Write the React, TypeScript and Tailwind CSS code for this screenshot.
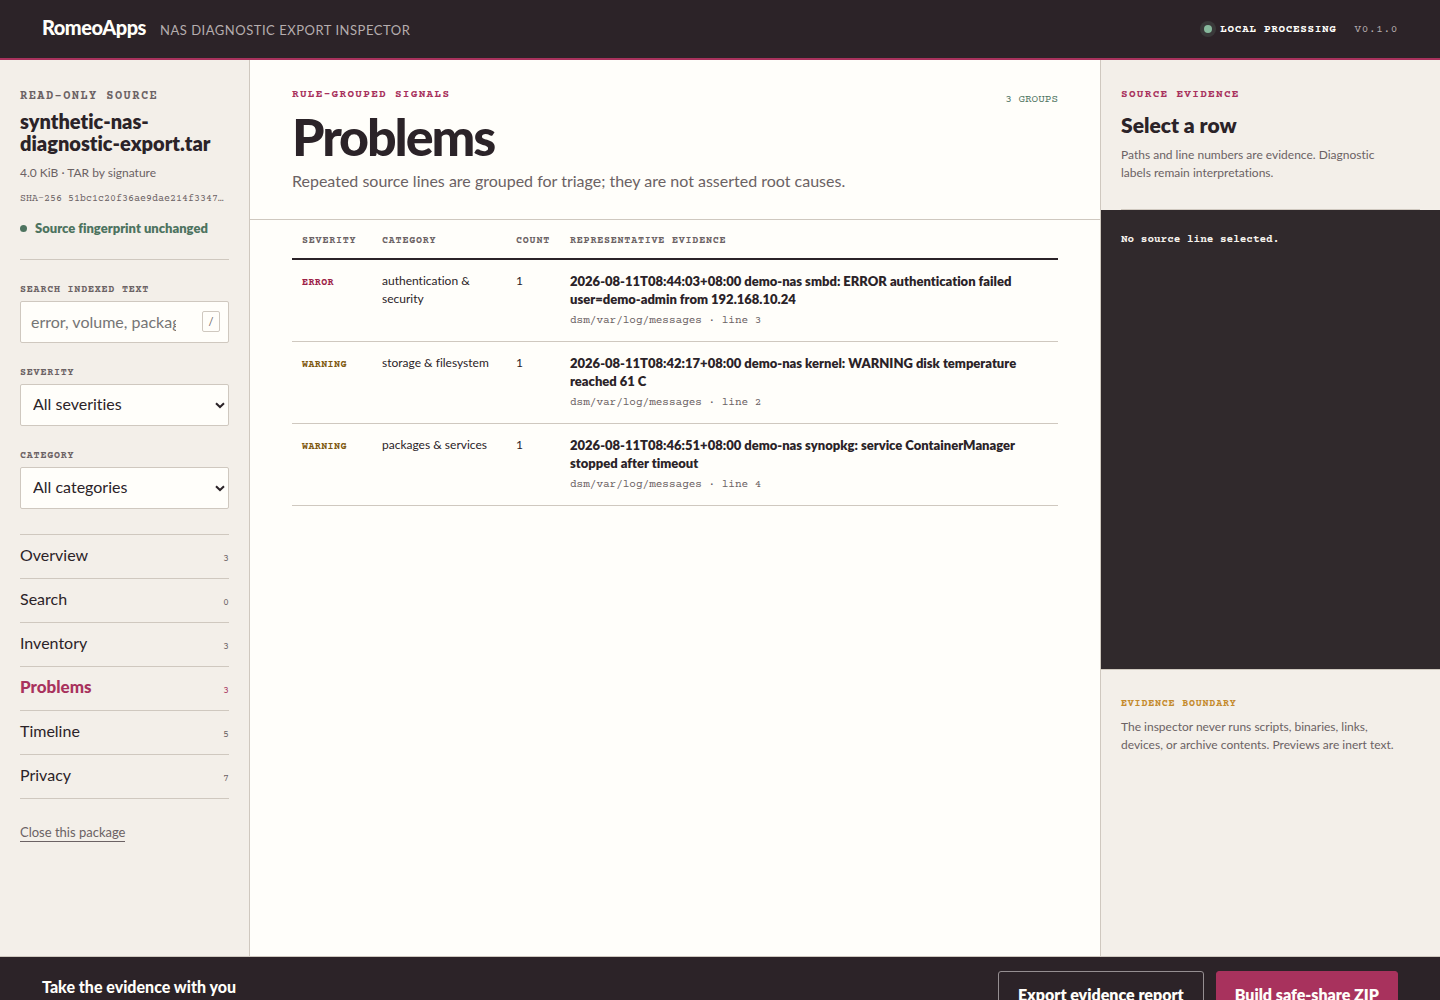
import { useState } from "react";

const views = [
  { name: "Overview", count: 3 },
  { name: "Search", count: 0 },
  { name: "Inventory", count: 3 },
  { name: "Problems", count: 3 },
  { name: "Timeline", count: 5 },
  { name: "Privacy", count: 7 },
];

const problems = [
  {
    severity: "ERROR",
    category: "authentication & security",
    count: 1,
    evidence: "2026-08-11T08:44:03+08:00 demo-nas smbd: ERROR authentication failed user=demo-admin from 192.168.10.24",
    source: "dsm/var/log/messages · line 3",
  },
  {
    severity: "WARNING",
    category: "storage & filesystem",
    count: 1,
    evidence: "2026-08-11T08:42:17+08:00 demo-nas kernel: WARNING disk temperature reached 61 C",
    source: "dsm/var/log/messages · line 2",
  },
  {
    severity: "WARNING",
    category: "packages & services",
    count: 1,
    evidence: "2026-08-11T08:46:51+08:00 demo-nas synopkg: service ContainerManager stopped after timeout",
    source: "dsm/var/log/messages · line 4",
  },
];

const mono = "font-['Courier_Prime','Liberation_Mono',monospace]";
const fieldLabel = `${mono} block text-[10px] leading-4 font-bold tracking-[0.08em] text-[#6b6264]`;

function SelectField({ id, label, option }: { id: string; label: string; option: string }) {
  return (
    <div>
      <label htmlFor={id} className={fieldLabel}>
        {label}
      </label>
      <div className="relative mt-[3px]">
        <select
          id={id}
          className="h-[42px] w-full appearance-none rounded-[2px] border border-[#cfc8bf] bg-[#fffefa] pr-6 pb-[2px] pl-3 text-base text-[#2b2328]"
        >
          <option>{option}</option>
        </select>
        <svg
          className="pointer-events-none absolute top-[18px] right-1 h-[7px] w-[10px]"
          viewBox="0 0 10 7"
          fill="none"
          stroke="#2b2328"
          strokeWidth="2"
          aria-hidden="true"
        >
          <path d="M1 1.2 5 5 9 1.2" />
        </svg>
      </div>
    </div>
  );
}

function Sidebar({ active, onSelect }: { active: string; onSelect: (name: string) => void }) {
  return (
    <aside className="border-r border-[#cfc8bf] bg-[#f3efe9] px-5 pt-[29px]">
      <section className="border-b border-[#cfc8bf] pb-[21px]">
        <p className={`${mono} text-xs leading-4 font-bold tracking-[0.12em] text-[#6b6264]`}>READ-ONLY SOURCE</p>
        <h2 className="mt-[5px] text-[20px] leading-[22px] font-extrabold">synthetic-nas-diagnostic-export.tar</h2>
        <p className="mt-[9px] text-xs leading-5 text-[#6b6264]">4.0 KiB · TAR by signature</p>
        <p className={`${mono} mt-2 text-[10px] leading-4 whitespace-nowrap text-[#6b6264]`}>
          SHA-256 51bc1c20f36ae9dae214f3347…
        </p>
        <p className="mt-[11px] flex items-center gap-2 text-[13px] leading-5 font-extrabold text-[#4d735f]">
          <span className="size-[7px] rounded-full bg-[#4d735f]" />
          Source fingerprint unchanged
        </p>
      </section>

      <form className="flex flex-col gap-[22px] pt-[22px] pb-[25px]" onSubmit={(e) => e.preventDefault()}>
        <div>
          <label htmlFor="search" className={fieldLabel}>
            SEARCH INDEXED TEXT
          </label>
          <div className="relative mt-[3px]">
            <input
              id="search"
              type="text"
              placeholder="error, volume, package…"
              className="h-[42px] w-full appearance-none rounded-[2px] border border-[#cfc8bf] bg-[#fffefa] pr-[52px] pb-[2px] pl-[10px] text-base placeholder:text-[#757575]"
            />
            <kbd
              className={`${mono} absolute top-[10px] right-[9px] flex h-[21px] w-[18px] items-center justify-center rounded-[2px] border border-[#cfc8bf] text-[10px] text-[#6b6264]`}
            >
              /
            </kbd>
          </div>
        </div>
        <SelectField id="severity" label="SEVERITY" option="All severities" />
        <SelectField id="category" label="CATEGORY" option="All categories" />
      </form>

      <nav className="border-t border-[#cfc8bf]">
        {views.map((view) => (
          <button
            key={view.name}
            type="button"
            onClick={() => onSelect(view.name)}
            className={
              view.name === active
                ? "flex h-11 w-full items-baseline justify-between border-b border-[#cfc8bf] pt-2 text-[17px] leading-6 font-black text-[#a8325d]"
                : "flex h-11 w-full items-baseline justify-between border-b border-[#cfc8bf] pt-2 leading-6"
            }
          >
            {view.name}
            <span
              className={
                view.name === active
                  ? `${mono} text-[10px] font-normal text-[#a8325d]`
                  : `${mono} text-[10px] text-[#6b6264]`
              }
            >
              {view.count}
            </span>
          </button>
        ))}
      </nav>

      <button type="button" className="mt-6 border-b border-[#6b6264] text-[13px] leading-[18px] text-[#6b6264]">
        Close this package
      </button>
    </aside>
  );
}

function ProblemsTable() {
  return (
    <table className="w-full table-fixed border-collapse text-left">
      <thead>
        <tr className={`${mono} h-[39px] border-b-2 border-[#2b2328] text-[10px] tracking-[0.08em] text-[#6b6264]`}>
          <th className="w-20 px-[10px] pt-[3px]">SEVERITY</th>
          <th className="w-[134px] px-[10px] pt-[3px]">CATEGORY</th>
          <th className="w-[54px] px-[10px] pt-[3px]">COUNT</th>
          <th className="px-[10px] pt-[3px]">REPRESENTATIVE EVIDENCE</th>
        </tr>
      </thead>
      <tbody>
        {problems.map((row) => (
          <tr key={row.source} className="border-b border-[#cfc8bf] align-top text-xs leading-[18px]">
            <td
              className={
                row.severity === "ERROR"
                  ? `${mono} px-[10px] pt-[14px] text-[10px] font-bold tracking-[0.04em] text-[#9c2248]`
                  : `${mono} px-[10px] pt-[14px] text-[10px] font-bold tracking-[0.04em] text-[#80590f]`
              }
            >
              {row.severity}
            </td>
            <td className="px-[10px] py-3">{row.category}</td>
            <td className="px-[10px] py-3">{row.count}</td>
            <td className="px-[10px] py-3">
              <strong className="block text-[13px] leading-[18px] font-extrabold">{row.evidence}</strong>
              <span className={`${mono} mt-1 block text-[11px] leading-[17px] text-[#6b6264]`}>{row.source}</span>
            </td>
          </tr>
        ))}
      </tbody>
    </table>
  );
}

function EvidencePanel() {
  return (
    <aside className="border-l border-[#cfc8bf] bg-[#f3efe9]">
      <header className="mx-5 border-b border-[#cfc8bf] pt-[27px] pb-[27px]">
        <p className={`${mono} text-[11px] leading-4 font-bold tracking-[0.12em] text-[#a8325d]`}>SOURCE EVIDENCE</p>
        <h2 className="mt-[10px] text-[21px] leading-6 font-extrabold">Select a row</h2>
        <p className="mt-[9px] pr-4 text-xs leading-[18px] text-[#6b6264]">
          Paths and line numbers are evidence. Diagnostic labels remain interpretations.
        </p>
      </header>
      <pre
        className={`${mono} min-h-[calc(46vh-1px)] bg-[#30292c] px-5 pt-[21px] text-[11px] leading-[18px] font-bold text-[#f7f3ed]`}
      >
        No source line selected.
      </pre>
      <section className="border-t border-[#cfc8bf] px-5 pt-[26px]">
        <h3 className={`${mono} text-[10px] leading-4 font-bold tracking-[0.08em] text-[#c48a2c]`}>
          EVIDENCE BOUNDARY
        </h3>
        <p className="mt-[6px] pr-4 text-xs leading-[18px] text-[#6b6264]">
          The inspector never runs scripts, binaries, links, devices, or archive contents. Previews are inert text.
        </p>
      </section>
    </aside>
  );
}

export default function App() {
  const [active, setActive] = useState("Problems");
  return (
    <div className="min-h-screen bg-[#fffefa] font-['Avenir_Next','Lato',sans-serif] text-base text-[#2b2328] [font-variant-ligatures:no-common-ligatures]">
      <header className="flex h-15 items-center justify-between border-b-2 border-[#a8325d] bg-[#2c2328] px-[42px]">
        <div className="flex items-baseline gap-[14px] pb-[2px]">
          <span className="text-[20px] leading-6 font-black tracking-tight text-[#fffefa]">RomeoApps</span>
          <span className="text-[13px] tracking-[0.04em] text-[#b5adae]">NAS DIAGNOSTIC EXPORT INSPECTOR</span>
        </div>
        <div className={`${mono} flex items-center gap-[18px] text-[11px] leading-[17px] tracking-[0.06em]`}>
          <span className="flex items-center gap-2 font-bold text-[#fffefa]">
            <span className="size-2 rounded-full bg-[#87b89c] ring-4 ring-[#87b89c]/15" />
            LOCAL PROCESSING
          </span>
          <span className="text-[#b5adae]">V0.1.0</span>
        </div>
      </header>

      <div className="grid min-h-[calc(100vh-104px)] grid-cols-[250px_minmax(0,1fr)_340px]">
        <Sidebar active={active} onSelect={setActive} />
        <main>
          <header className="flex items-start justify-between border-b border-[#cfc8bf] px-[42px] pt-[27px] pb-[26px]">
            <div>
              <p className={`${mono} text-[11px] leading-4 font-bold tracking-[0.12em] text-[#a8325d]`}>
                RULE-GROUPED SIGNALS
              </p>
              <h1 className="mt-2 text-[52px] leading-[50px] font-black tracking-[-0.04em]">Problems</h1>
              <p className="mt-2 leading-6 text-[#6b6264]">
                Repeated source lines are grouped for triage; they are not asserted root causes.
              </p>
            </div>
            <p className={`${mono} mt-[5px] text-[11px] leading-4 text-[#4d735f]`}>3 GROUPS</p>
          </header>
          <div className="px-[42px]">
            <ProblemsTable />
          </div>
        </main>
        <EvidencePanel />
      </div>

      <footer className="flex items-start justify-between border-t border-[#cfc8bf] bg-[#2c2328] px-[42px] py-[14px] text-[#fffefa]">
        <strong className="mt-1 text-base leading-6 font-black">Take the evidence with you</strong>
        <div className="flex gap-3 font-extrabold">
          <button type="button" className="h-12 rounded-[3px] border border-[#958e91] px-[19px]">
            Export evidence report
          </button>
          <button type="button" className="h-12 rounded-[3px] border border-[#a8325d] bg-[#a8325d] px-[18px]">
            Build safe-share ZIP
          </button>
        </div>
      </footer>
    </div>
  );
}
